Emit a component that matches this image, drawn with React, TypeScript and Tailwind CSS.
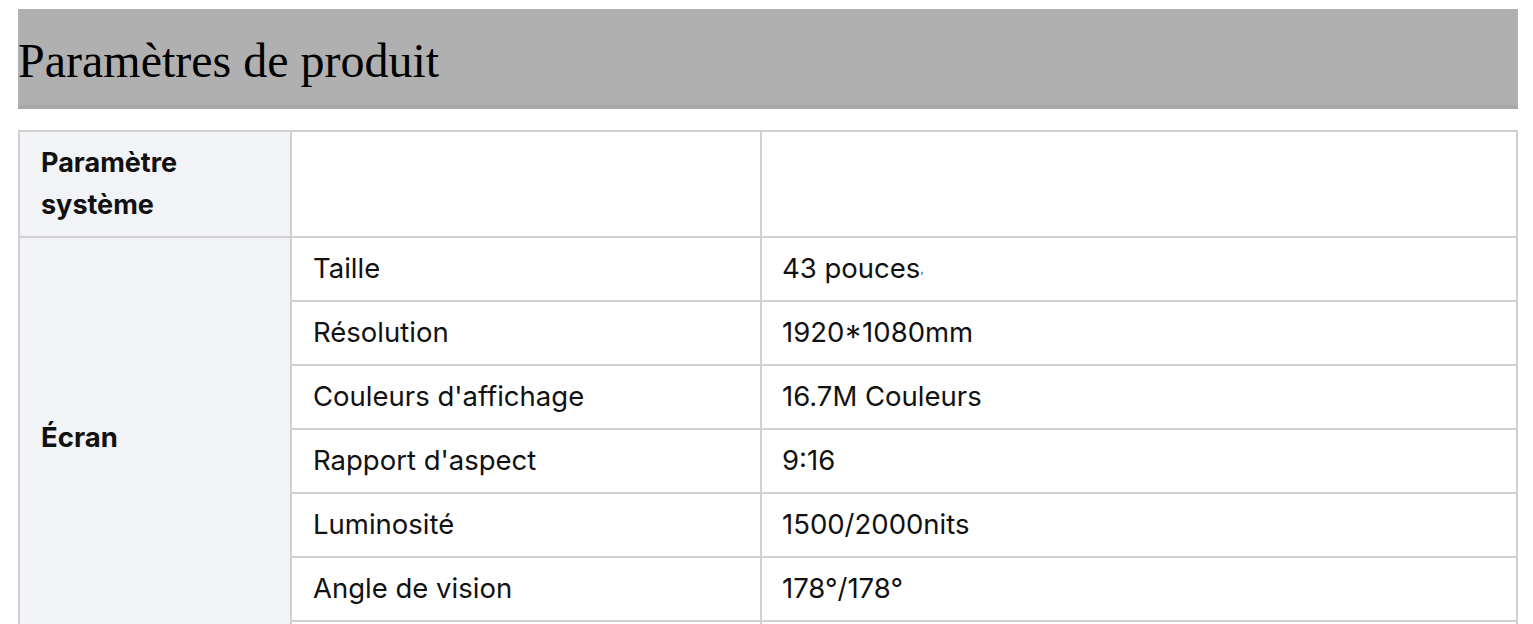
import { Fragment, type ReactNode } from 'react'

const rows: { label: string; value: ReactNode }[] = [
  {
    label: 'Taille',
    value: (
      <>
        43 pouces<span className="text-[13px] font-light">,</span>
      </>
    ),
  },
  { label: 'Résolution', value: '1920*1080mm' },
  { label: "Couleurs d'affichage", value: '16.7M Couleurs' },
  { label: "Rapport d'aspect", value: '9:16' },
  { label: 'Luminosité', value: '1500/2000nits' },
  { label: 'Angle de vision', value: '178°/178°' },
  { label: '', value: '' },
]

export default function App() {
  return (
    <div className="min-h-screen bg-white pt-[9px] pl-[18px]">
      <div className="w-[1500px]">
        {/* Title bar */}
        <div className="h-[100px] bg-[#b0b0b0] border-b-[4px] border-[#a8a8a8] flex items-center">
          <h1 className="text-[48px] leading-none text-black font-['Liberation_Serif','Times_New_Roman',serif] mt-[8px]">
            Paramètres de produit
          </h1>
        </div>

        {/* Spec table */}
        <div className="mt-[21px] bg-[#d0d0d0] p-[2px] grid grid-cols-[270px_468px_754px] gap-[2px] font-['Inter','Noto_Sans_CJK_SC',sans-serif] text-[27.5px] text-[#111]">
          <div className="bg-[#f2f3f7] h-[104px] px-[21px] flex items-center font-bold text-[27px] leading-[42px]">
            <span>
              Paramètre
              <br />
              système
            </span>
          </div>
          <div className="bg-white" />
          <div className="bg-white" />

          <div className="bg-[#f2f3f7] row-span-7 px-[21px] flex items-start pt-[179px] font-bold text-[27.5px]">
            Écran
          </div>
          {rows.map((r, i) => (
            <Fragment key={i}>
              <div className="bg-white h-[62px] px-[21px] flex items-center">{r.label}</div>
              <div className="bg-white h-[62px] px-[20px] flex items-center">{r.value}</div>
            </Fragment>
          ))}
        </div>
      </div>
    </div>
  )
}
